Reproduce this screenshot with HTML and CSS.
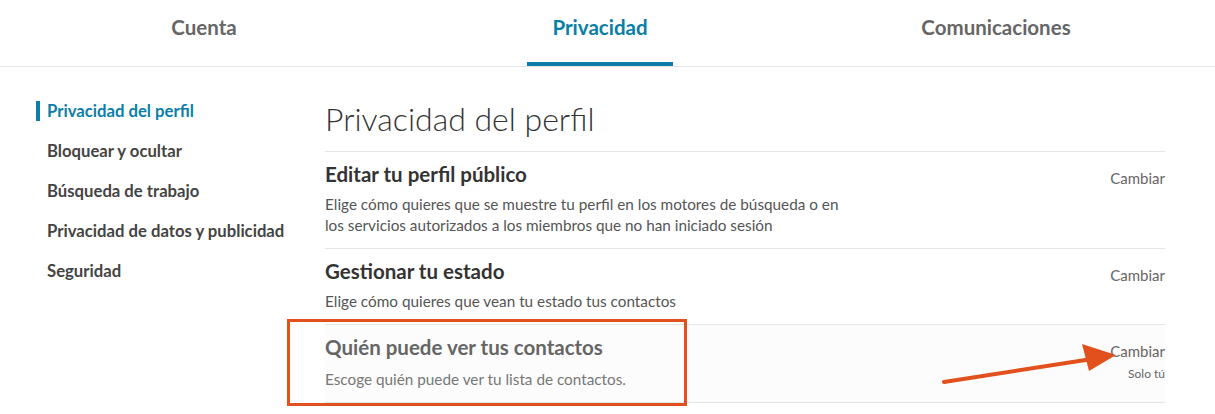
FILE: index.html
```html
<!DOCTYPE html>
<html lang="es">
<head>
<meta charset="utf-8">
<title>Privacidad</title>
<link rel="stylesheet" href="styles.css">
</head>
<body>
<header class="tabs">
  <div class="tab"><span class="tab-label">Cuenta</span></div>
  <div class="tab"><span class="tab-label active">Privacidad</span></div>
  <div class="tab"><span class="tab-label">Comunicaciones</span></div>
</header>
<div class="layout">
  <nav class="sidenav">
    <a class="nav-item active">Privacidad del perfil</a>
    <a class="nav-item">Bloquear y ocultar</a>
    <a class="nav-item">Búsqueda de trabajo</a>
    <a class="nav-item">Privacidad de datos y publicidad</a>
    <a class="nav-item">Seguridad</a>
  </nav>
  <main class="content">
    <h1 class="heading">Privacidad del perfil</h1>
    <section class="row">
      <div class="row-text">
        <h2 class="row-title">Editar tu perfil público</h2>
        <p class="row-desc">Elige cómo quieres que se muestre tu perfil en los motores de búsqueda o en los servicios autorizados a los miembros que no han iniciado sesión</p>
      </div>
      <div class="row-action"><span class="change">Cambiar</span></div>
    </section>
    <section class="row">
      <div class="row-text">
        <h2 class="row-title">Gestionar tu estado</h2>
        <p class="row-desc">Elige cómo quieres que vean tu estado tus contactos</p>
      </div>
      <div class="row-action"><span class="change">Cambiar</span></div>
    </section>
    <section class="row row-muted">
      <div class="row-text">
        <h2 class="row-title">Quién puede ver tus contactos</h2>
        <p class="row-desc">Escoge quién puede ver tu lista de contactos.</p>
      </div>
      <div class="row-action"><span class="change">Cambiar</span><span class="value">Solo tú</span></div>
      <div class="highlight-box"></div>
      <svg class="arrow" width="180" height="50" viewBox="0 0 180 50">
        <line x1="2" y1="44" x2="150" y2="21" stroke="#e2501e" stroke-width="4" stroke-linecap="round"/>
        <polygon points="174,17 140,6 147,33" fill="#e2501e"/>
      </svg>
    </section>
  </main>
</div>
</body>
</html>
```

FILE: styles.css
```css
* { box-sizing: border-box; }
html, body { margin: 0; padding: 0; background: #fff; }
body {
  font-family: Lato, "Open Sans", "Liberation Sans", sans-serif;
  color: #333;
  width: 1215px;
  height: 414px;
  overflow: hidden;
}
.tabs {
  display: grid;
  grid-template-columns: repeat(3, 396px);
  padding-left: 6px;
  height: 67px;
  border-bottom: 1px solid #e6e6e6;
}
.tab {
  display: flex;
  justify-content: center;
  align-items: stretch;
}
.tab-label {
  display: flex;
  align-items: center;
  padding: 2px 25px 10px;
  font-size: 20.5px;
  font-weight: 700;
  color: #666;
  border-bottom: 4px solid transparent;
  height: 66px;
}
.tab-label.active {
  color: #0a7ea8;
  border-bottom-color: #0a7ea8;
}
.layout {
  display: flex;
  padding-left: 36px;
}
.sidenav {
  width: 289px;
  padding-top: 34px;
  display: flex;
  flex-direction: column;
  gap: 20px;
}
.nav-item {
  display: block;
  font-size: 16.7px;
  font-weight: 700;
  line-height: 20px;
  color: #444;
  padding-left: 11px;
}
.nav-item.active {
  color: #0a7ea8;
  border-left: 4px solid #0a7ea8;
  padding-left: 7px;
}
.content {
  width: 840px;
  padding-top: 32px;
}
.heading {
  margin: 0 0 12px;
  font-size: 32px;
  font-weight: 300;
  line-height: 40px;
  color: #333;
}
.row {
  position: relative;
  display: flex;
  justify-content: space-between;
  border-top: 1px solid #e6e6e6;
  padding: 9px 0 12px;
}
.row-title {
  margin: 0;
  font-size: 20.5px;
  font-weight: 700;
  line-height: 26px;
  color: #333;
}
.row-desc {
  margin: 7px 0 0;
  max-width: 530px;
  font-size: 15.3px;
  line-height: 21px;
  color: #555;
}
.row-action {
  display: flex;
  flex-direction: column;
  align-items: flex-end;
  padding-top: 7px;
  gap: 5px;
}
.change {
  font-size: 15px;
  line-height: 20px;
  color: #666;
}
.value {
  font-size: 12px;
  line-height: 16px;
  color: #666;
}
.row-muted { background: #fcfcfc; border-bottom: 1px solid #e6e6e6; padding-bottom: 12px; }
.row-muted .row-title { color: #666; }
.row-muted .row-desc { color: #777; margin-top: 9px; }
.highlight-box {
  position: absolute;
  left: -38px;
  top: -6px;
  width: 400px;
  height: 87px;
  border: 3px solid #e2501e;
}
.arrow {
  position: absolute;
  left: 617px;
  top: 13px;
}
```
